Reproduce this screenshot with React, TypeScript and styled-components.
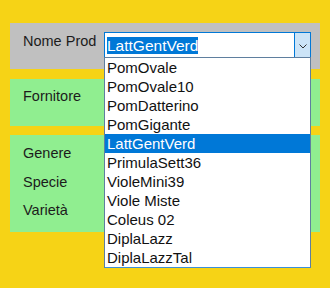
import * as React from 'react';
import styled, { createGlobalStyle } from 'styled-components';

const items = [
    'PomOvale',
    'PomOvale10',
    'PomDatterino',
    'PomGigante',
    'LattGentVerd',
    'PrimulaSett36',
    'VioleMini39',
    'Viole Miste',
    'Coleus 02',
    'DiplaLazz',
    'DiplaLazzTal',
];

const selected = 'LattGentVerd';

export default function App() {
    return (
        <>
            <GlobalStyle />
            <Page>
                <GrayPanel>
                    <Label>Nome Prod</Label>
                    <Combo>
                        <ComboText>
                            <Selection>{selected}</Selection>
                        </ComboText>
                        <DropButton>
                            <svg width="8" height="5" viewBox="0 0 8 5">
                                <polyline points="0.5,0.5 4,4 7.5,0.5" fill="none" stroke="#333" strokeWidth="1" />
                            </svg>
                        </DropButton>
                        <List>
                            {items.map((item) => (
                                <Item key={item} active={item === selected}>
                                    {item}
                                </Item>
                            ))}
                        </List>
                    </Combo>
                </GrayPanel>
                <GreenPanel>
                    <Label>Fornitore</Label>
                </GreenPanel>
                <GreenPanel tall={true}>
                    <Label>Genere</Label>
                    <Label>Specie</Label>
                    <Label>Varietà</Label>
                </GreenPanel>
            </Page>
        </>
    );
}

const GlobalStyle = createGlobalStyle`
    html, body {
        margin: 0;
        padding: 0;
        background: #f6d316;
        font-family: "Liberation Sans", Arial, sans-serif;
    }
`;

const Page = styled.div`
    width: 330px;
    height: 288px;
    box-sizing: border-box;
    padding: 23px 10px 0 10px;
    display: flex;
    flex-direction: column;
    gap: 10px;
`;

const GrayPanel = styled.div`
    height: 46px;
    box-sizing: border-box;
    background: #c0c0c0;
    display: flex;
    align-items: flex-start;
    padding: 9px 9px 0 13px;
    position: relative;
    z-index: 2;
`;

const GreenPanel = styled.div<{ tall?: boolean }>`
    height: ${(p) => (p.tall ? '97px' : '47px')};
    margin-top: ${(p) => (p.tall ? '-1px' : '0')};
    box-sizing: border-box;
    background: #90ee90;
    padding: ${(p) => (p.tall ? '9px' : '8px')} 13px 0 13px;
    display: flex;
    flex-direction: column;
    gap: 9.5px;
`;

const Label = styled.div`
    font-size: 14.5px;
    line-height: 19px;
    color: #1c1c1c;
    width: 81px;
    white-space: nowrap;
`;

const Combo = styled.div`
    position: relative;
    width: 207px;
    height: 26px;
    box-sizing: border-box;
    border: 1px solid #0078d7;
    background: #fff;
    display: flex;
`;

const ComboText = styled.div`
    flex: 1;
    padding-left: 2px;
    display: flex;
    align-items: center;
    font-size: 15.5px;
`;

const Selection = styled.span`
    background: #0078d7;
    color: #fff;
    line-height: 17px;
`;

const DropButton = styled.div`
    width: 15px;
    background: #cce4f7;
    border-left: 1px solid #0078d7;
    display: flex;
    align-items: center;
    justify-content: center;
    padding-top: 2px;
`;

const List = styled.div`
    position: absolute;
    left: -1px;
    top: 24px;
    width: 207px;
    box-sizing: border-box;
    background: #fff;
    border: 1px solid #5f7f9f;
    border-bottom-color: #3c8fd9;
`;

const Item = styled.div<{ active?: boolean }>`
    height: 19px;
    line-height: 19px;
    padding-left: 2px;
    font-size: 15px;
    color: ${(p) => (p.active ? '#fff' : '#111')};
    background: ${(p) => (p.active ? '#0078d7' : 'transparent')};
    white-space: nowrap;
`;
